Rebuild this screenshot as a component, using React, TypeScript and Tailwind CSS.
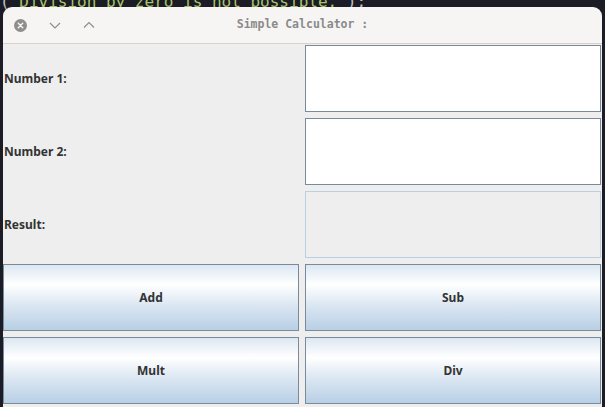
import { FC } from "react";

const labelCls =
  "flex items-center pl-[1px] text-[12px] font-bold text-[#333333] [font-family:'Noto_Sans',sans-serif]";

const btnCls =
  "flex items-center justify-center border border-[#7a8a99] bg-[linear-gradient(to_bottom,#dce7f2_0%,#ffffff_30%,#dde8f3_60%,#b8cfe5_100%)] text-[12px] font-bold text-[#333333] [font-family:'Noto_Sans',sans-serif]";

const TitleBar: FC = () => (
  <div className="relative flex h-[37px] items-center border-b border-[#d6d1cd] bg-[#f6f5f4] rounded-t-[9px]">
    <div className="flex items-center gap-[20px] pl-[11px]">
      <svg width="13" height="13" viewBox="0 0 13 13">
        <circle cx="6.5" cy="6.5" r="6.5" fill="#8e8e8e" />
        <path d="M4.3 4.3 L8.7 8.7 M8.7 4.3 L4.3 8.7" stroke="#f6f5f4" strokeWidth="1.4" strokeLinecap="round" />
      </svg>
      <svg width="14" height="14" viewBox="0 0 14 14" className="ml-[1px]">
        <path d="M2 5 L7 10 L12 5" fill="none" stroke="#8e8e8e" strokeWidth="1.2" />
      </svg>
      <svg width="14" height="14" viewBox="0 0 14 14">
        <path d="M2 9.5 L7 4.5 L12 9.5" fill="none" stroke="#8e8e8e" strokeWidth="1.2" />
      </svg>
    </div>
    <div className="absolute inset-0 flex items-center justify-center pointer-events-none">
      <span className="text-[11.5px] font-bold text-[#8a8a8a] [font-family:'DejaVu_Sans_Mono',monospace]">
        Simple Calculator :
      </span>
    </div>
  </div>
);

export default function App() {
  return (
    <div className="relative h-[407px] w-[605px] overflow-hidden bg-[#1b1c26]">
      {/* editor text behind the window */}
      <div className="absolute left-[0px] top-[-8px] whitespace-pre text-[16px] leading-[20px] text-[#a9c46a] [font-family:'DejaVu_Sans_Mono',monospace]">
        <span className="text-[#c0c0c0]">(</span>"Division by zero is not possible."<span className="text-[#c0c0c0]">);</span>
      </div>
      <div className="relative ml-[3px] mt-[7px] flex h-[400px] w-[599px] flex-col">
        <TitleBar />
        <div className="grid flex-1 grid-cols-2 grid-rows-[repeat(5,67px)] gap-[6px] bg-[#eeeeee] pt-[1px] pr-[1px]">
          <div className={labelCls}>Number 1:</div>
          <input className="border border-[#7a8a99] bg-white outline-none" />
          <div className={labelCls}>Number 2:</div>
          <input className="border border-[#7a8a99] bg-white outline-none" />
          <div className={labelCls}>Result:</div>
          <input disabled className="border border-[#b8cfe5] bg-[#eeeeee] outline-none" />
          <button className={btnCls}>Add</button>
          <button className={btnCls}>Sub</button>
          <button className={btnCls}>Mult</button>
          <button className={btnCls}>Div</button>
        </div>
      </div>
    </div>
  );
}
